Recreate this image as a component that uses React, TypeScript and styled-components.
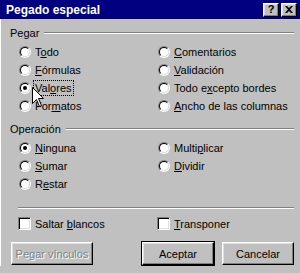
import React from "react";
import styled, { createGlobalStyle } from "styled-components";

const GlobalStyle = createGlobalStyle`
  html, body {
    margin: 0;
    padding: 0;
    background: #c0c0c0;
  }
`;

type Opt = { label: React.ReactNode; checked?: boolean; focus?: boolean };

const pegarLeft: Opt[] = [
  { label: <>T<u>o</u>do</> },
  { label: <><u>F</u>órmulas</> },
  { label: <>Val<u>o</u>res</>, checked: true, focus: true },
  { label: <>For<u>m</u>atos</> },
];

const pegarRight: Opt[] = [
  { label: <><u>C</u>omentarios</> },
  { label: <><u>V</u>alidación</> },
  { label: <>Todo e<u>x</u>cepto bordes</> },
  { label: <><u>A</u>ncho de las columnas</> },
];

const opLeft: Opt[] = [
  { label: <><u>N</u>inguna</>, checked: true },
  { label: <><u>S</u>umar</> },
  { label: <>R<u>e</u>star</> },
];

const opRight: Opt[] = [
  { label: <>Multi<u>p</u>licar</> },
  { label: <><u>D</u>ividir</> },
];

function OptionColumn({ items }: { items: Opt[] }) {
  return (
    <Column>
      {items.map((o, i) => (
        <Option key={i}>
          <Radio $checked={o.checked} />
          <OptionText $focus={o.focus}>{o.label}</OptionText>
        </Option>
      ))}
    </Column>
  );
}

function App() {
  return (
    <Window>
      <GlobalStyle />
      <TitleBar>
        <Title>Pegado especial</Title>
        <CaptionButtons>
          <CaptionButton>?</CaptionButton>
          <CaptionButton>
            <svg width="8" height="7" viewBox="0 0 8 7">
              <path d="M0 0h2l2 2 2-2h2L5 3.5 8 7H6L4 5 2 7H0l3-3.5z" fill="#000" />
            </svg>
          </CaptionButton>
        </CaptionButtons>
      </TitleBar>
      <Body>
        <GroupHeader>
          <span>Pegar</span>
          <Etch />
        </GroupHeader>
        <Options>
          <OptionColumn items={pegarLeft} />
          <OptionColumn items={pegarRight} />
        </Options>
        <GroupHeader $gap={7}>
          <span>Operación</span>
          <Etch />
        </GroupHeader>
        <Options>
          <OptionColumn items={opLeft} />
          <OptionColumn items={opRight} />
        </Options>
        <Separator />
        <Checks>
          <Check>
            <CheckBox />
            <span>Saltar <u>b</u>lancos</span>
          </Check>
          <Check>
            <CheckBox />
            <span><u>T</u>ransponer</span>
          </Check>
        </Checks>
        <Buttons>
          <Button disabled $width={82}>Pegar vínculos</Button>
          <Spacer />
          <DefaultFrame>
            <Button $width={72}>Aceptar</Button>
          </DefaultFrame>
          <Button $width={72}>Cancelar</Button>
        </Buttons>
      </Body>
      <Cursor width="12" height="20" viewBox="0 0 12 20">
        <path
          d="M0.5 0.5 V16.5 L4.5 12.5 L7.5 19.5 L9.5 18.5 L6.5 11.5 H11.5 Z"
          fill="#fff"
          stroke="#000"
          strokeWidth="1"
        />
      </Cursor>
    </Window>
  );
}

const Window = styled.div`
  position: relative;
  width: 300px;
  height: 273px;
  background: #c0c0c0;
  font-family: "Liberation Sans", Arial, sans-serif;
  font-size: 11px;
  color: #000;
  overflow: hidden;
`;

const TitleBar = styled.div`
  height: 19px;
  background: #000080;
  display: flex;
  align-items: center;
  justify-content: space-between;
  padding: 0 3px 0 6px;
`;

const Title = styled.span`
  color: #fff;
  font-weight: bold;
  font-size: 12px;
`;

const CaptionButtons = styled.div`
  display: flex;
  gap: 2px;
`;

const CaptionButton = styled.div`
  width: 16px;
  height: 14px;
  box-sizing: border-box;
  background: #c0c0c0;
  border: 1px solid;
  border-color: #fff #000 #000 #fff;
  box-shadow: inset -1px -1px 0 #808080, inset 1px 1px 0 #dfdfdf;
  display: flex;
  align-items: center;
  justify-content: center;
  font-weight: bold;
  font-size: 11px;
  line-height: 1;
`;

const Body = styled.div`
  display: flex;
  flex-direction: column;
  padding: 7px 6px 0 9px;
  border-left: 1px solid #fff;
`;

const GroupHeader = styled.div<{ $gap?: number }>`
  display: flex;
  align-items: center;
  gap: 5px;
  height: 13px;
  margin-top: ${(p) => p.$gap ?? 0}px;
`;

const Etch = styled.div`
  flex: 1;
  height: 0;
  border-top: 1px solid #808080;
  border-bottom: 1px solid #fff;
`;

const Options = styled.div`
  display: grid;
  grid-template-columns: 139px 1fr;
  padding: 4px 0 0 9px;
`;

const Column = styled.div`
  display: flex;
  flex-direction: column;
`;

const Option = styled.div`
  display: flex;
  align-items: center;
  gap: 3px;
  height: 18px;
`;

const Radio = styled.span<{ $checked?: boolean }>`
  position: relative;
  width: 12px;
  height: 12px;
  box-sizing: border-box;
  border-radius: 50%;
  border: 1px solid;
  border-color: #808080 #fff #fff #808080;
  flex: none;

  &::before {
    content: "";
    position: absolute;
    inset: 0;
    border-radius: 50%;
    border: 1px solid;
    border-color: #000 #dfdfdf #dfdfdf #000;
    background: #fff;
  }

  &::after {
    content: "";
    display: ${(p) => (p.$checked ? "block" : "none")};
    position: absolute;
    left: 3px;
    top: 3px;
    width: 4px;
    height: 4px;
    border-radius: 50%;
    background: #000;
  }
`;

const OptionText = styled.span<{ $focus?: boolean }>`
  padding: 0 1px;
  outline: ${(p) => (p.$focus ? "1px dotted #000" : "none")};
  line-height: 14px;
`;

const Separator = styled.div`
  margin: 14px 0 0 8px;
  border-top: 1px solid #808080;
  border-bottom: 1px solid #fff;
`;

const Checks = styled.div`
  display: grid;
  grid-template-columns: 139px 1fr;
  padding: 8px 0 0 8px;
`;

const Check = styled.label`
  display: flex;
  align-items: center;
  gap: 4px;
  height: 13px;
`;

const CheckBox = styled.span`
  width: 13px;
  height: 13px;
  box-sizing: border-box;
  border: 1px solid;
  border-color: #808080 #fff #fff #808080;
  box-shadow: inset 1px 1px 0 #000, inset -1px -1px 0 #dfdfdf;
  background: #fff;
  flex: none;
`;

const Buttons = styled.div`
  display: flex;
  align-items: center;
  gap: 7px;
  margin-top: 11px;
  padding-left: 1px;
`;

const Spacer = styled.div`
  flex: 1;
`;

const DefaultFrame = styled.div`
  border: 1px solid #000;
  display: flex;
`;

const Button = styled.button<{ $width: number }>`
  width: ${(p) => p.$width}px;
  height: 23px;
  box-sizing: border-box;
  padding: 0;
  background: #c0c0c0;
  font-family: "Liberation Sans", Arial, sans-serif;
  font-size: 11px;
  color: #000;
  border: 1px solid;
  border-color: #fff #000 #000 #fff;
  box-shadow: inset -1px -1px 0 #808080, inset 1px 1px 0 #dfdfdf;

  &:disabled {
    color: #808080;
    text-shadow: 1px 1px 0 #fff;
  }
`;

const Cursor = styled.svg`
  position: absolute;
  left: 32px;
  top: 87px;
`;

export default App;
